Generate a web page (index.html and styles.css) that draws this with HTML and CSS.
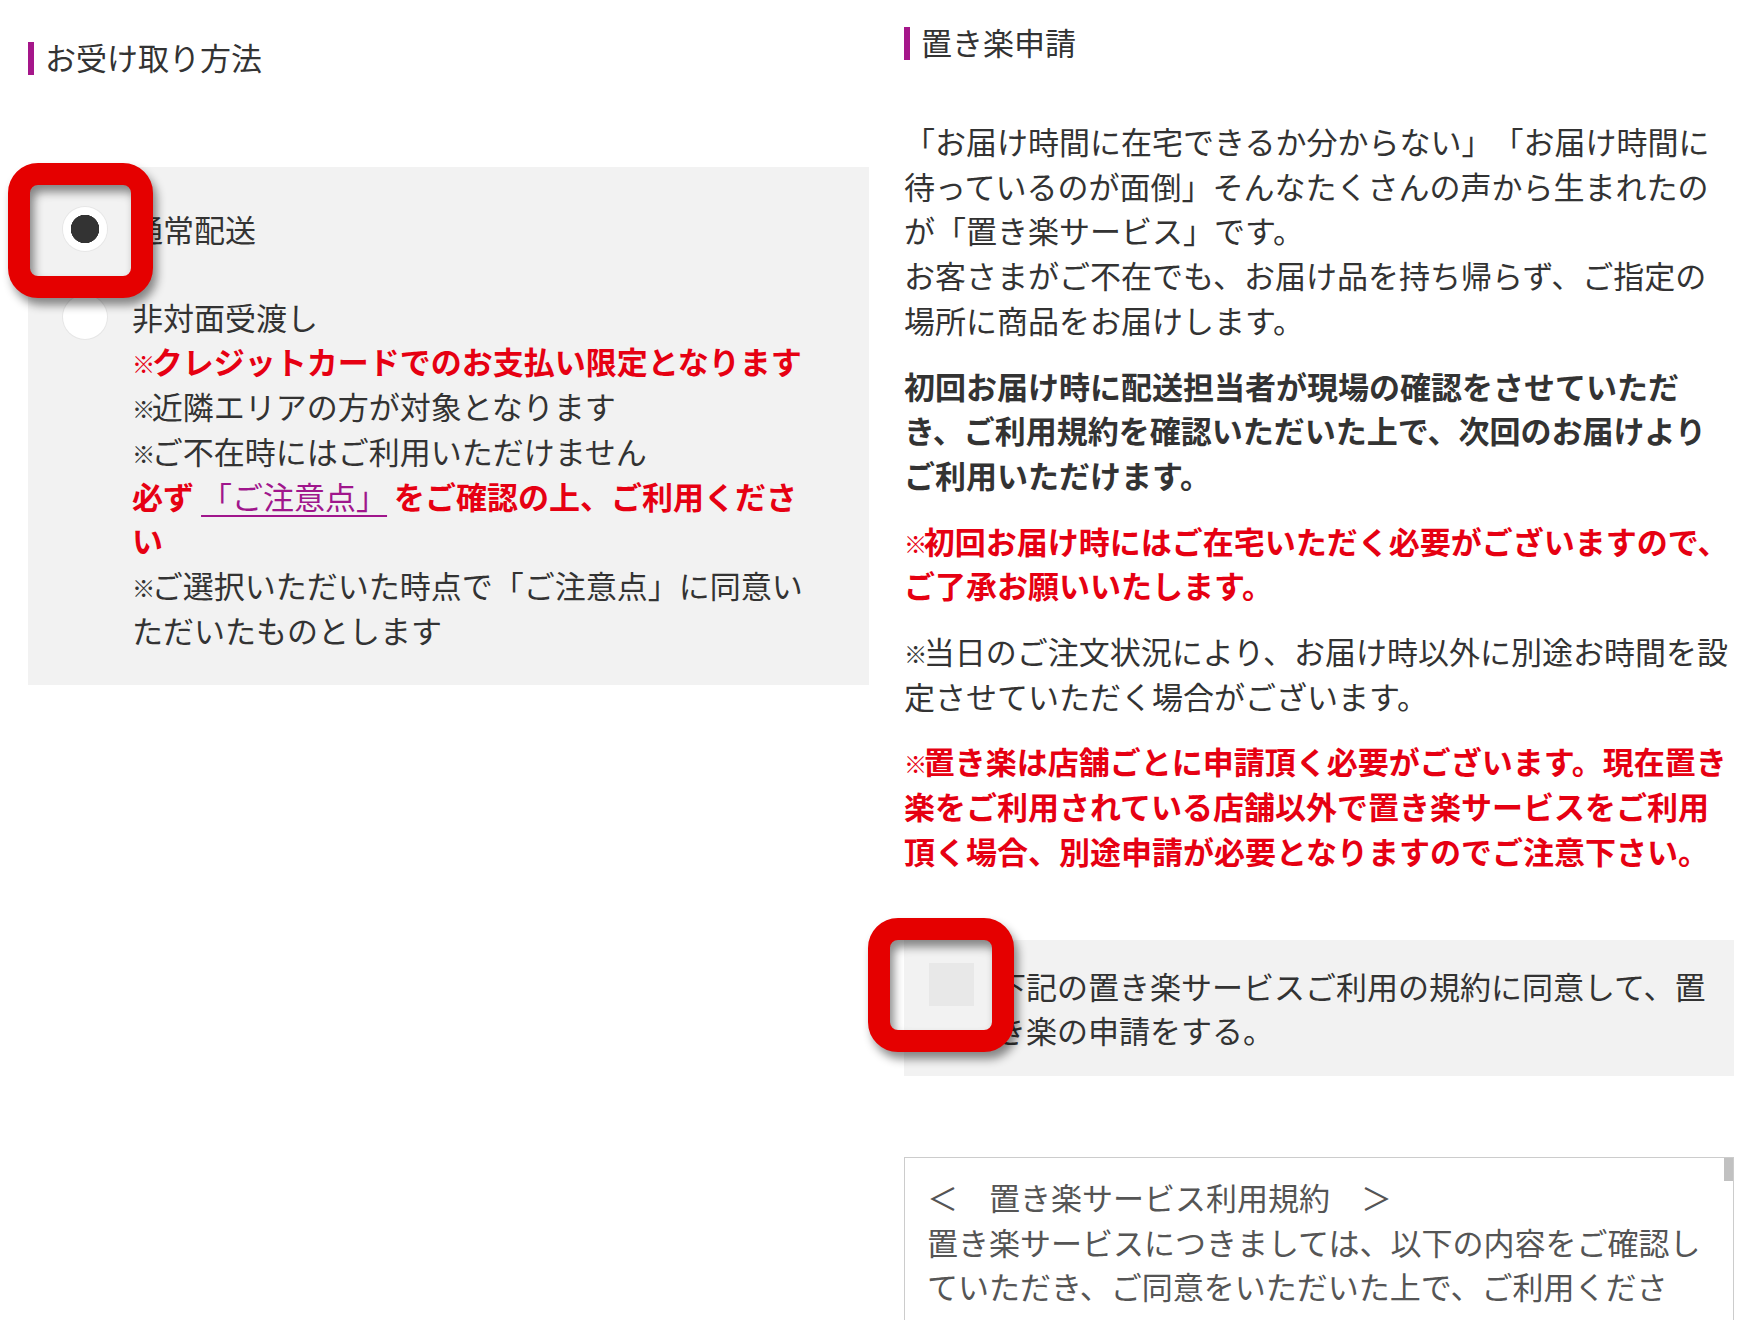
FILE: index.html
```html
<!DOCTYPE html>
<html lang="ja">
<head>
    <meta charset="UTF-8">
    <meta name="viewport" content="width=device-width, initial-scale=1.0">
    <title>お受け取り方法・置き楽申請</title>
    <link rel="stylesheet" href="styles.css">
</head>
<body>
    <div class="page">
        <section class="col col-left">
            <h2 class="section-title">お受け取り方法</h2>
            <div class="method-box">
                <label class="method-row">
                    <input type="radio" name="uketori" value="normal" checked>
                    <span class="method-name">通常配送</span>
                    <span class="point-frame"></span>
                </label>
                <label class="method-row">
                    <input type="radio" name="uketori" value="hitaimen">
                    <span class="method-name">非対面受渡し</span>
                </label>
                <div class="method-notes">
                    <p class="note-red"><span class="kome">※</span>クレジットカードでのお支払い限定となります</p>
                    <p><span class="kome">※</span>近隣エリアの方が対象となります</p>
                    <p><span class="kome">※</span>ご不在時にはご利用いただけません</p>
                    <p class="note-red">必ず <a href="#chuui">「ご注意点」</a> をご確認の上、ご利用ください</p>
                    <p><span class="kome">※</span>ご選択いただいた時点で「ご注意点」に同意いただいたものとします</p>
                </div>
            </div>
        </section>

        <section class="col col-right">
            <h2 class="section-title">置き楽申請</h2>
            <p class="okiraku-text">「お届け時間に在宅できるか分からない」「お届け時間に待っているのが面倒」そんなたくさんの声から生まれたのが「置き楽サービス」です。<br>お客さまがご不在でも、お届け品を持ち帰らず、ご指定の場所に商品をお届けします。</p>
            <p class="okiraku-text bold">初回お届け時に配送担当者が現場の確認をさせていただき、ご利用規約を確認いただいた上で、次回のお届けよりご利用いただけます。</p>
            <p class="okiraku-text bold red"><span class="kome">※</span>初回お届け時にはご在宅いただく必要がございますので、ご了承お願いいたします。</p>
            <p class="okiraku-text"><span class="kome">※</span>当日のご注文状況により、お届け時以外に別途お時間を設定させていただく場合がございます。</p>
            <p class="okiraku-text bold red"><span class="kome">※</span>置き楽は店舗ごとに申請頂く必要がございます。現在置き楽をご利用されている店舗以外で置き楽サービスをご利用頂く場合、別途申請が必要となりますのでご注意下さい。</p>

            <label class="agree-box">
                <input type="checkbox" name="okiraku_agree" value="1">
                <span class="agree-text">下記の置き楽サービスご利用の規約に同意して、置き楽の申請をする。</span>
                <span class="point-frame"></span>
            </label>

            <div class="terms-box">
                <p>＜　置き楽サービス利用規約　＞<br>置き楽サービスにつきましては、以下の内容をご確認していただき、ご同意をいただいた上で、ご利用ください。</p>
            </div>
        </section>
    </div>
</body>
</html>
```

FILE: styles.css
```css
body {
    margin: 0;
    background-color: #fff;
    color: #333;
    font-family: "Noto Sans CJK JP", sans-serif;
    font-size: 31px;
    line-height: 44.7px;
    text-spacing-trim: space-all;
}

.page {
    display: flex;
    gap: 35px;
    padding-left: 28px;
}

.col-left {
    width: 841px;
    padding-top: 42px;
}

.col-right {
    width: 830px;
    padding-top: 27px;
}

.section-title {
    margin: 0;
    font-size: 31px;
    font-weight: normal;
    line-height: 29px;
    border-left: 6px solid #a5168a;
    padding: 0 0 4px 11px;
}

/* 米印は詰めて表示 */
.kome {
    font-size: 0.75em;
    line-height: 1;
    letter-spacing: -0.15em;
    vertical-align: 0.05em;
}

/* お受け取り方法 */
.method-box {
    margin-top: 92px;
    background-color: #f2f2f2;
    padding: 40px 57px 33px 35px;
}

.method-row {
    position: relative;
    display: flex;
    align-items: center;
    gap: 25px;
}

.method-row + .method-row {
    margin-top: 43px;
}

.method-row input[type="radio"] {
    appearance: none;
    flex-shrink: 0;
    margin: 0;
    width: 44px;
    height: 44px;
    border-radius: 50%;
    background-color: #fff;
    box-shadow: 0 0 0 1px #e6e6e6;
}

.method-row input[type="radio"]:checked {
    background: radial-gradient(circle, #333 0 14px, #fff 14.5px);
}

.method-notes {
    margin-left: 69px;
}

.method-notes p {
    margin: 0;
}

.note-red {
    color: #e60012;
    font-weight: bold;
}

.note-red a {
    color: #a0168c;
    font-weight: normal;
    text-decoration: underline;
    text-decoration-thickness: 2px;
    text-underline-offset: 6px;
}

/* 置き楽申請 */
.okiraku-text {
    margin: 21px 0 0;
}

.section-title + .okiraku-text {
    margin-top: 59px;
}

.okiraku-text.bold {
    font-weight: bold;
}

.okiraku-text.red {
    color: #e60012;
}

.agree-box {
    position: relative;
    display: flex;
    align-items: flex-start;
    gap: 21px;
    margin-top: 66px;
    background-color: #f2f2f2;
    padding: 24px 20px 23px 25px;
}

.agree-box input[type="checkbox"] {
    appearance: none;
    flex-shrink: 0;
    margin: -1px 0 0;
    width: 45px;
    height: 43px;
    border-radius: 0;
    background-color: #e8e8e8;
}

.terms-box {
    position: relative;
    margin-top: 81px;
    height: 240px;
    overflow: hidden;
    border: 1px solid #ccc;
    padding: 17px 25px 0 22px;
    color: #555;
}

.terms-box p {
    margin: 0;
}

/* スクロールバーのつまみ */
.terms-box::after {
    content: "";
    position: absolute;
    top: 0;
    right: 0;
    width: 9px;
    height: 23px;
    background-color: #c1c1c1;
}

/* 赤枠の注目マーク */
.point-frame {
    position: absolute;
    z-index: 1;
    box-sizing: border-box;
    width: 145px;
    height: 135px;
    border: 22px solid #e50000;
    border-radius: 30px;
    filter: drop-shadow(4px 7px 5px rgba(0, 0, 0, 0.45));
    pointer-events: none;
}

.method-row .point-frame {
    left: -55px;
    top: -44px;
}

.agree-box .point-frame {
    left: -36px;
    top: -22px;
    width: 146px;
    height: 134px;
}
```
